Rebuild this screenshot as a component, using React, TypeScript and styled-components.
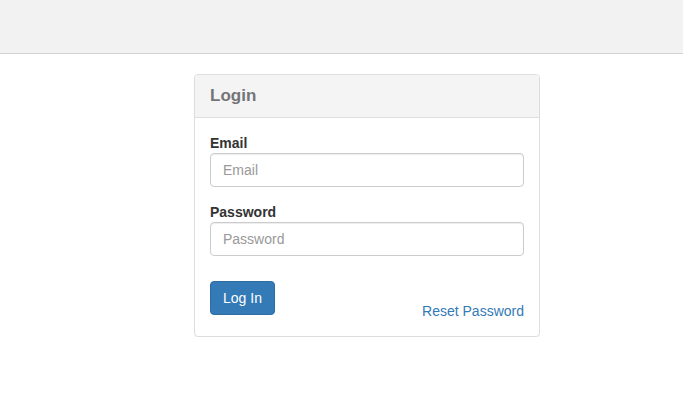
import styled, { createGlobalStyle } from "styled-components";

const GlobalStyle = createGlobalStyle`
  *, *::before, *::after {
    box-sizing: border-box;
  }
  body {
    margin: 0;
    background: #fff;
    font-family: "Liberation Sans", Arial, Helvetica, sans-serif;
    font-size: 14px;
    line-height: 20px;
    color: #333;
  }
`;

const Navbar = styled.header`
  height: 54px;
  background: #f2f2f2;
  border-bottom: 1px solid #d4d4d4;
  margin-bottom: 20px;
`;

const Page = styled.main`
  padding-left: 194px;
`;

const Panel = styled.section`
  width: 346px;
  background: #fff;
  border: 1px solid #ddd;
  border-radius: 4px;
  box-shadow: 0 1px 1px rgba(0, 0, 0, 0.05);
`;

const PanelHeading = styled.div`
  padding: 11px 15px;
  background: #f4f4f4;
  border-bottom: 1px solid #ddd;
  border-radius: 3px 3px 0 0;
`;

const Title = styled.h3`
  margin: 0;
  font-size: 17px;
  line-height: 20px;
  font-weight: bold;
  color: #737478;
`;

const PanelBody = styled.form`
  padding: 15px;
`;

const FormGroup = styled.div`
  margin-bottom: 15px;
`;

const Label = styled.label`
  display: block;
  font-weight: bold;
  color: #333;
`;

const Input = styled.input`
  display: block;
  width: 100%;
  height: 34px;
  padding: 6px 12px;
  font-family: inherit;
  font-size: 14px;
  color: #555;
  background: #fff;
  border: 1px solid #ccc;
  border-radius: 4px;
  box-shadow: inset 0 1px 1px rgba(0, 0, 0, 0.075);
  &::placeholder {
    color: #999;
  }
`;

const Actions = styled.div`
  display: flex;
  justify-content: space-between;
  align-items: flex-start;
  padding-top: 10px;
`;

const Button = styled.button`
  height: 34px;
  padding: 6px 12px;
  font-family: inherit;
  font-size: 14px;
  line-height: 20px;
  color: #fff;
  background: #337ab7;
  border: 1px solid #2e6da4;
  border-radius: 4px;
  cursor: pointer;
`;

const ResetLink = styled.a`
  margin-top: 20px;
  color: #337ab7;
  text-decoration: none;
`;

export default function App() {
  return (
    <>
      <GlobalStyle />
      <Navbar />
      <Page>
        <Panel>
          <PanelHeading>
            <Title>Login</Title>
          </PanelHeading>
          <PanelBody onSubmit={(e) => e.preventDefault()}>
            <FormGroup>
              <Label htmlFor="email">Email</Label>
              <Input id="email" type="email" placeholder="Email" />
            </FormGroup>
            <FormGroup>
              <Label htmlFor="password">Password</Label>
              <Input id="password" type="password" placeholder="Password" />
            </FormGroup>
            <Actions>
              <Button type="submit">Log In</Button>
              <ResetLink href="#">Reset Password</ResetLink>
            </Actions>
          </PanelBody>
        </Panel>
      </Page>
    </>
  );
}
